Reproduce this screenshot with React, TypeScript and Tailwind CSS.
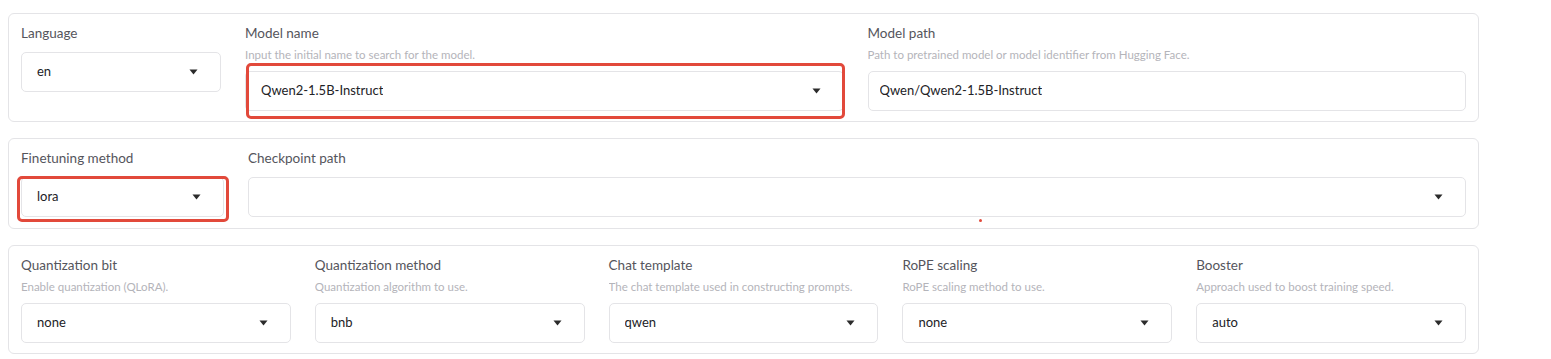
import React from 'react';

interface FieldProps {
  label: string;
  info?: string;
  value?: string;
  select?: boolean;
  highlight?: 'wide' | 'tight';
  className?: string;
}

const Caret = () => (
  <svg width="9" height="6" viewBox="0 0 9 6" className="shrink-0">
    <path d="M0.5 0.5 L8.5 0.5 L4.5 5.5 Z" fill="#2b2b2b" />
  </svg>
);

const Field: React.FC<FieldProps> = ({ label, info, value = '', select = true, highlight, className = 'flex-1' }) => (
  <div className={`${className} min-w-0 flex flex-col`}>
    <span className="h-5 leading-5 text-[13.5px] text-[#55555c]">{label}</span>
    {info && <span className="mt-1 h-4 leading-4 text-[11.5px] text-[#b4b4ba] truncate">{info}</span>}
    <div className={`relative ${info ? 'mt-2' : 'mt-[9px]'}`}>
      <div
        className={`h-10 rounded-[5px] border border-[#e4e4e7] bg-white flex items-center justify-between text-[13px] text-[#222226] ${
          select ? 'pl-[15px] pr-[22px]' : 'px-[11px]'
        }`}
      >
        <span className="truncate">{value}</span>
        {select && <Caret />}
      </div>
      {highlight === 'wide' && (
        <div className="absolute left-[1px] -right-[1px] -top-2 -bottom-2 rounded-[5px] border-[3px] border-[#e2493b] pointer-events-none" />
      )}
      {highlight === 'tight' && (
        <div className="absolute -left-1 -right-[5px] -top-[1px] -bottom-[5px] rounded-[5px] border-[3px] border-[#e2493b] pointer-events-none" />
      )}
    </div>
  </div>
);

const Panel: React.FC<{ children: React.ReactNode; extra?: React.ReactNode; pad?: string }> = ({
  children,
  extra,
  pad = 'pb-[10px]',
}) => (
  <div className={`relative rounded-[6px] border border-[#e4e4e7] bg-white px-3 pt-[9px] ${pad} flex gap-6`}>
    {children}
    {extra}
  </div>
);

export default function App() {
  return (
    <div
      className="w-[1551px] h-[359px] bg-white overflow-hidden"
      style={{ fontFamily: '"Lato", "Liberation Sans", sans-serif' }}
    >
      <div className="ml-2 mt-[13px] w-[1471px] flex flex-col gap-4">
        <Panel>
          <Field label="Language" value="en" className="w-[200px] shrink-0" />
          <Field
            label="Model name"
            info="Input the initial name to search for the model."
            value="Qwen2-1.5B-Instruct"
            highlight="wide"
          />
          <Field
            label="Model path"
            info="Path to pretrained model or model identifier from Hugging Face."
            value="Qwen/Qwen2-1.5B-Instruct"
            select={false}
          />
        </Panel>

        <Panel
          pad="pb-[11px]"
          extra={<span className="absolute left-[970px] top-[80px] w-[3px] h-[3px] rounded-full bg-[#e2493b]" />}
        >
          <Field label="Finetuning method" value="lora" className="w-[203px] shrink-0" highlight="tight" />
          <Field label="Checkpoint path" />
        </Panel>

        <Panel>
          <Field label="Quantization bit" info="Enable quantization (QLoRA)." value="none" />
          <Field label="Quantization method" info="Quantization algorithm to use." value="bnb" />
          <Field label="Chat template" info="The chat template used in constructing prompts." value="qwen" />
          <Field label="RoPE scaling" info="RoPE scaling method to use." value="none" />
          <Field label="Booster" info="Approach used to boost training speed." value="auto" />
        </Panel>
      </div>
    </div>
  );
}
